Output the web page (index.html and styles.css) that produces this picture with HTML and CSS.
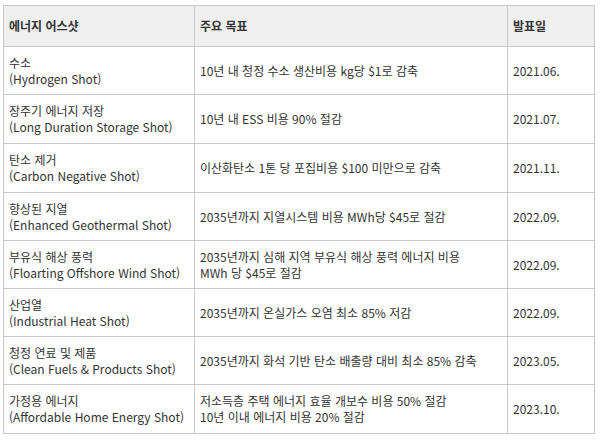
FILE: index.html
```html
<!DOCTYPE html>
<html lang="ko">
<head>
<meta charset="utf-8">
<link rel="stylesheet" href="styles.css">
</head>
<body>
<table class="shots">
  <colgroup>
    <col class="c1"><col class="c2"><col class="c3">
  </colgroup>
  <thead>
    <tr><th>에너지 어스샷</th><th>주요 목표</th><th>발표일</th></tr>
  </thead>
  <tbody>
    <tr><td>수소<br>(Hydrogen Shot)</td><td>10년 내 청정 수소 생산비용 kg당 $1로 감축</td><td>2021.06.</td></tr>
    <tr class="tall"><td>장주기 에너지 저장<br>(Long Duration Storage Shot)</td><td>10년 내 ESS 비용 90% 절감</td><td>2021.07.</td></tr>
    <tr class="tall"><td>탄소 제거<br>(Carbon Negative Shot)</td><td>이산화탄소 1톤 당 포집비용 $100 미만으로 감축</td><td>2021.11.</td></tr>
    <tr><td>향상된 지열<br>(Enhanced Geothermal Shot)</td><td>2035년까지 지열시스템 비용 MWh당 $45로 절감</td><td>2022.09.</td></tr>
    <tr><td>부유식 해상 풍력<br>(Floarting Offshore Wind Shot)</td><td>2035년까지 심해 지역 부유식 해상 풍력 에너지 비용<br>MWh 당 $45로 절감</td><td>2022.09.</td></tr>
    <tr><td>산업열<br>(Industrial Heat Shot)</td><td>2035년까지 온실가스 오염 최소 85% 저감</td><td>2022.09.</td></tr>
    <tr><td>청정 연료 및 제품<br>(Clean Fuels &amp; Products Shot)</td><td>2035년까지 화석 기반 탄소 배출량 대비 최소 85% 감축</td><td>2023.05.</td></tr>
    <tr class="tall"><td>가정용 에너지<br>(Affordable Home Energy Shot)</td><td>저소득층 주택 에너지 효율 개보수 비용 50% 절감<br>10년 이내 에너지 비용 20% 절감</td><td>2023.10.</td></tr>
  </tbody>
</table>
</body>
</html>
```
FILE: styles.css
```css
html, body {
  margin: 0;
  padding: 0;
  background: #ffffff;
}
body {
  padding: 5px 0 0 3px;
  font-family: "Noto Sans CJK KR", "Noto Sans", sans-serif;
  font-size: 12px;
  color: #333333;
}
.shots {
  border-collapse: collapse;
  width: 591px;
  table-layout: fixed;
}
.c1 { width: 191px; }
.c2 { width: 313px; }
.c3 { width: 87px; }
.shots th, .shots td {
  border: 1px solid #c8c8c8;
  text-align: left;
  vertical-align: middle;
  padding: 0 0 0 5px;
  line-height: 16px;
}
.shots th {
  background: #efefef;
  font-weight: bold;
  height: 40px;
}
.shots td {
  height: 47px;
}
.shots tr.tall td {
  height: 48px;
}
```
